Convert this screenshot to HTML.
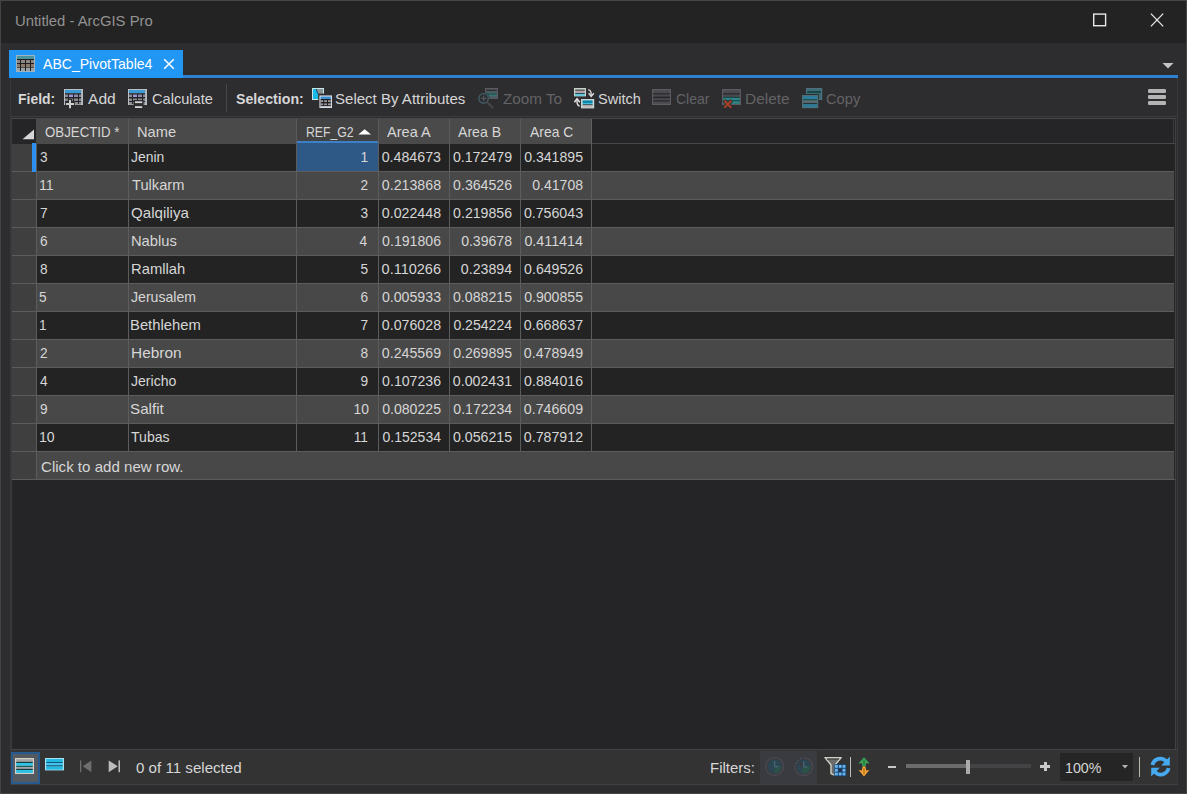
<!DOCTYPE html>
<html><head><meta charset="utf-8"><title>Untitled - ArcGIS Pro</title>
<style>
html,body{margin:0;padding:0;}
body{width:1187px;height:794px;overflow:hidden;background:#2d2d30;font-family:"Liberation Sans", sans-serif;position:relative;}
#root{position:absolute;left:0;top:0;width:1187px;height:794px;overflow:hidden;}
#root div,#root svg{position:absolute;}
.t{position:absolute;white-space:pre;line-height:normal;font-family:"Liberation Sans", sans-serif;}
</style></head><body><div id="root">
<div style="left:0px;top:0px;width:1187px;height:43px;background:#232323;"></div>
<div style="left:0px;top:0px;width:1187px;height:1px;background:#464646;"></div>
<div style="left:0px;top:0px;width:1px;height:794px;background:#444446;"></div>
<div style="left:1186px;top:0px;width:1px;height:794px;background:#454548;"></div>
<div style="left:0px;top:793px;width:1187px;height:1px;background:#454548;"></div>
<div style="left:9px;top:50px;width:174px;height:27.5px;background:#2196f3;"></div>
<div style="left:183px;top:74.9px;width:995px;height:2.8px;background:#2e80d2;"></div>
<div style="left:10px;top:78px;width:1168px;height:707px;background:transparent;box-sizing:border-box;border:1px solid #414144;border-left-color:#38383b;border-right-color:#38383b;border-top:none;"></div>
<div style="left:11px;top:116px;width:1166px;height:1px;background:#3c3c40;"></div>
<div style="left:226px;top:84px;width:1px;height:28px;background:#47474a;"></div>
<div style="left:12px;top:118px;width:1164px;height:632px;background:#252528;"></div>
<div style="left:12px;top:118px;width:1164px;height:1px;background:#47474a;"></div>
<div style="left:11px;top:118px;width:1px;height:632px;background:#3a3a3d;"></div>
<div style="left:1175px;top:118px;width:1px;height:632px;background:#414144;"></div>
<div style="left:12px;top:119px;width:24px;height:24px;background:#252528;"></div>
<div style="left:36px;top:119px;width:556px;height:25px;background:#4a4a4a;"></div>
<div style="left:297px;top:119px;width:81px;height:25px;background:#424242;"></div>
<div style="left:297px;top:141px;width:81px;height:2px;background:#3b80c8;"></div>
<div style="left:592px;top:143px;width:583px;height:1px;background:#47474a;"></div>
<div style="left:128px;top:119px;width:1px;height:25px;background:#5a5a5a;"></div>
<div style="left:296px;top:119px;width:1px;height:25px;background:#5a5a5a;"></div>
<div style="left:378px;top:119px;width:1px;height:25px;background:#5a5a5a;"></div>
<div style="left:449px;top:119px;width:1px;height:25px;background:#5a5a5a;"></div>
<div style="left:520px;top:119px;width:1px;height:25px;background:#5a5a5a;"></div>
<div style="left:591px;top:119px;width:1px;height:25px;background:#606060;"></div>
<div style="left:1173px;top:119px;width:1px;height:24px;background:#3a3a3e;"></div>
<svg style="left:12px;top:118px" width="24" height="26"><path d="M10.5 21.3 L22 21.3 L22 11.5 Z" fill="#d6d6d6"/></svg>
<svg style="left:356px;top:126px" width="18" height="10"><path d="M2.3 8.4 L15 8.4 L8.65 3.3 Z" fill="#ffffff"/></svg>
<div style="left:12px;top:144px;width:24px;height:27px;background:#3f3f3f;"></div>
<div style="left:37px;top:144px;width:1137px;height:27px;background:#232323;"></div>
<div style="left:12px;top:171px;width:1162px;height:1px;background:#5c5c5c;"></div>
<div style="left:12px;top:172px;width:24px;height:27px;background:#3f3f3f;"></div>
<div style="left:37px;top:172px;width:1137px;height:27px;background:#484848;"></div>
<div style="left:12px;top:199px;width:1162px;height:1px;background:#5c5c5c;"></div>
<div style="left:12px;top:200px;width:24px;height:27px;background:#3f3f3f;"></div>
<div style="left:37px;top:200px;width:1137px;height:27px;background:#232323;"></div>
<div style="left:12px;top:227px;width:1162px;height:1px;background:#5c5c5c;"></div>
<div style="left:12px;top:228px;width:24px;height:27px;background:#3f3f3f;"></div>
<div style="left:37px;top:228px;width:1137px;height:27px;background:#484848;"></div>
<div style="left:12px;top:255px;width:1162px;height:1px;background:#5c5c5c;"></div>
<div style="left:12px;top:256px;width:24px;height:27px;background:#3f3f3f;"></div>
<div style="left:37px;top:256px;width:1137px;height:27px;background:#232323;"></div>
<div style="left:12px;top:283px;width:1162px;height:1px;background:#5c5c5c;"></div>
<div style="left:12px;top:284px;width:24px;height:27px;background:#3f3f3f;"></div>
<div style="left:37px;top:284px;width:1137px;height:27px;background:#484848;"></div>
<div style="left:12px;top:311px;width:1162px;height:1px;background:#5c5c5c;"></div>
<div style="left:12px;top:312px;width:24px;height:27px;background:#3f3f3f;"></div>
<div style="left:37px;top:312px;width:1137px;height:27px;background:#232323;"></div>
<div style="left:12px;top:339px;width:1162px;height:1px;background:#5c5c5c;"></div>
<div style="left:12px;top:340px;width:24px;height:27px;background:#3f3f3f;"></div>
<div style="left:37px;top:340px;width:1137px;height:27px;background:#484848;"></div>
<div style="left:12px;top:367px;width:1162px;height:1px;background:#5c5c5c;"></div>
<div style="left:12px;top:368px;width:24px;height:27px;background:#3f3f3f;"></div>
<div style="left:37px;top:368px;width:1137px;height:27px;background:#232323;"></div>
<div style="left:12px;top:395px;width:1162px;height:1px;background:#5c5c5c;"></div>
<div style="left:12px;top:396px;width:24px;height:27px;background:#3f3f3f;"></div>
<div style="left:37px;top:396px;width:1137px;height:27px;background:#484848;"></div>
<div style="left:12px;top:423px;width:1162px;height:1px;background:#5c5c5c;"></div>
<div style="left:12px;top:424px;width:24px;height:27px;background:#3f3f3f;"></div>
<div style="left:37px;top:424px;width:1137px;height:27px;background:#232323;"></div>
<div style="left:12px;top:451px;width:1162px;height:1px;background:#5c5c5c;"></div>
<div style="left:297px;top:143px;width:81px;height:28px;background:#2e5886;"></div>
<div style="left:32px;top:143.4px;width:4.2px;height:28.4px;background:#2d8ff0;"></div>
<div style="left:36px;top:144px;width:1px;height:308px;background:#5c5c5c;"></div>
<div style="left:128px;top:144px;width:1px;height:308px;background:#5c5c5c;"></div>
<div style="left:296px;top:144px;width:1px;height:308px;background:#5c5c5c;"></div>
<div style="left:378px;top:144px;width:1px;height:308px;background:#5c5c5c;"></div>
<div style="left:449px;top:144px;width:1px;height:308px;background:#5c5c5c;"></div>
<div style="left:520px;top:144px;width:1px;height:308px;background:#5c5c5c;"></div>
<div style="left:591px;top:144px;width:1px;height:308px;background:#5c5c5c;"></div>
<div style="left:12px;top:452px;width:24px;height:27px;background:#3f3f3f;"></div>
<div style="left:37px;top:452px;width:1137px;height:27px;background:#484848;"></div>
<div style="left:36px;top:452px;width:1px;height:27px;background:#5c5c5c;"></div>
<div style="left:12px;top:479px;width:1163px;height:1px;background:#5c5c5c;"></div>
<div style="left:11px;top:750px;width:1166px;height:34px;background:#333334;"></div>
<div style="left:11px;top:749px;width:1166px;height:1px;background:#434345;"></div>
<svg class="ic" style="left:1090px;top:10px" width="20" height="20" viewBox="0 0 20 20" ><rect x="3.7" y="4.1" width="11.9" height="11.6" fill="none" stroke="#e8e8e8" stroke-width="1.4"/></svg>
<svg class="ic" style="left:1147px;top:10px" width="20" height="20" viewBox="0 0 20 20" ><path d="M3.9 3.6 L16.2 16.4 M16.2 3.6 L3.9 16.4" stroke="#e8e8e8" stroke-width="1.3" fill="none"/></svg>
<svg class="ic" style="left:16px;top:55px" width="19" height="17" viewBox="0 0 19 17" >
<rect x="0" y="0" width="19" height="17" fill="#9fb4c0"/>
<rect x="1" y="1" width="17" height="3" fill="#4a949e"/>
<rect x="1" y="4" width="17" height="12" fill="#1e1e1e"/>
<g fill="#8e8684"><rect x="1" y="5" width="3" height="3"/><rect x="5" y="5" width="4" height="3"/><rect x="10" y="5" width="4" height="3"/><rect x="15" y="5" width="3" height="3"/></g>
<g fill="#8a7a6c"><rect x="1" y="9" width="3" height="3.5"/><rect x="5" y="9" width="4" height="3.5"/><rect x="10" y="9" width="4" height="3.5"/><rect x="15" y="9" width="3" height="3.5"/></g>
<g fill="#9aa4aa"><rect x="1" y="13" width="3" height="3"/><rect x="5" y="13" width="4" height="3"/><rect x="10" y="13" width="4" height="3"/><rect x="15" y="13" width="3" height="3"/></g>
</svg>
<svg class="ic" style="left:162px;top:57px" width="14" height="14" viewBox="0 0 14 14" ><path d="M2.2 2.2 L11.8 11.8 M11.8 2.2 L2.2 11.8" stroke="#ffffff" stroke-width="1.5" fill="none"/></svg>
<svg class="ic" style="left:1160px;top:61px" width="16" height="10" viewBox="0 0 16 10" ><path d="M2.5 2 L13.5 2 L8 7.5 Z" fill="#c4c4c4"/></svg>
<svg class="ic" style="left:64px;top:89px" width="20" height="20" viewBox="0 0 20 20" >
<rect x="0" y="0" width="19" height="16" fill="#b9c0c4"/>
<rect x="1" y="1" width="16" height="3.2" fill="#3b9bd6"/>
<rect x="1" y="4.2" width="16" height="11" fill="#232327"/>
<g fill="#8a8a94"><rect x="1" y="5.5" width="3" height="2.5"/><rect x="5" y="5.5" width="4" height="2.5" fill="#9a98d2"/><rect x="10" y="5.5" width="4" height="2.5" fill="#8c8cb0"/><rect x="15" y="5.5" width="2" height="2.5"/></g>
<g fill="#8c8c90"><rect x="1" y="9.5" width="3" height="2.5"/><rect x="5" y="9.5" width="4" height="2.5"/><rect x="10" y="9.5" width="4" height="2.5"/><rect x="15" y="9.5" width="2" height="2.5"/></g>
<g fill="#8c8c90"><rect x="1" y="13" width="3" height="2.2"/><rect x="5" y="13" width="4" height="2.2"/><rect x="10" y="13" width="4" height="2.2"/><rect x="15" y="13" width="2" height="2.2"/></g>
<rect x="17" y="1" width="1.2" height="14" fill="#a9aeb2"/>

<path d="M6 10 L6 19.5 M1.2 15 L10.8 15" stroke="#2d2d30" stroke-width="4.4" fill="none"/>
<path d="M6 11 L6 19.2 M2 15 L10 15" stroke="#cdcdcd" stroke-width="2" fill="none"/>
</svg>
<svg class="ic" style="left:128px;top:89px" width="20" height="20" viewBox="0 0 20 20" >
<rect x="0" y="0" width="19" height="16" fill="#b9c0c4"/>
<rect x="1" y="1" width="16" height="3.2" fill="#3b9bd6"/>
<rect x="1" y="4.2" width="16" height="11" fill="#232327"/>
<g fill="#8a8a94"><rect x="1" y="5.5" width="3" height="2.5"/><rect x="5" y="5.5" width="4" height="2.5" fill="#9a98d2"/><rect x="10" y="5.5" width="4" height="2.5" fill="#8c8cb0"/><rect x="15" y="5.5" width="2" height="2.5"/></g>
<g fill="#8c8c90"><rect x="1" y="9.5" width="3" height="2.5"/><rect x="5" y="9.5" width="4" height="2.5"/><rect x="10" y="9.5" width="4" height="2.5"/><rect x="15" y="9.5" width="2" height="2.5"/></g>
<g fill="#8c8c90"><rect x="1" y="13" width="3" height="2.2"/><rect x="5" y="13" width="4" height="2.2"/><rect x="10" y="13" width="4" height="2.2"/><rect x="15" y="13" width="2" height="2.2"/></g>
<rect x="17" y="1" width="1.2" height="14" fill="#a9aeb2"/>

<rect x="5.6" y="11" width="10" height="9" fill="#2d2d30"/>
<rect x="7" y="12.3" width="7.2" height="1.8" fill="#d4d4d4"/>
<rect x="7" y="17.2" width="7.2" height="1.8" fill="#d4d4d4"/>
</svg>
<svg class="ic" style="left:312px;top:88px" width="21" height="21" viewBox="0 0 21 21" >
<rect x="0" y="0" width="12" height="12" fill="#c6e6ee"/>
<rect x="1" y="1" width="10" height="10" fill="#8c9494"/>
<path d="M1 1 L4.2 1 L5.2 4 L6.3 6.2 L6.3 11 L1 11 Z" fill="#19b9ea"/>
<path d="M4.2 1 L5.2 4 L6.3 6.2" stroke="#0d4f78" stroke-width="1" fill="none"/>
<rect x="6.3" y="5.6" width="5.7" height="6.4" fill="#2d2d30"/>
<rect x="6.8" y="6.8" width="13.6" height="13.6" fill="#2d2d30"/>
<rect x="7.4" y="7.4" width="12.6" height="12.6" fill="#d3d9e0"/>
<rect x="8.6" y="8.6" width="10.2" height="2.4" fill="#3b8fd2"/>
<rect x="8.6" y="11" width="10.2" height="7.8" fill="#202024"/>
<g fill="#9a9a9c"><rect x="8.6" y="12.2" width="2.6" height="1.8"/><rect x="12.2" y="12.2" width="2.8" height="1.8"/><rect x="16" y="12.2" width="2.8" height="1.8"/>
<rect x="8.6" y="15.4" width="2.6" height="1.8"/><rect x="12.2" y="15.4" width="2.8" height="1.8"/><rect x="16" y="15.4" width="2.8" height="1.8"/></g>
<rect x="8.6" y="18" width="10.2" height="1" fill="#b9bcc2"/>
</svg>
<svg class="ic" style="left:478px;top:88px" width="21" height="21" viewBox="0 0 21 21" >
<rect x="7" y="0" width="13" height="11" fill="#5a5a60"/>
<rect x="8.2" y="1.6" width="10.6" height="1.4" fill="#2e2e32"/>
<rect x="8.2" y="3.6" width="10.6" height="1.6" fill="#3f5f60"/>
<rect x="8.2" y="5.4" width="10.6" height="1.4" fill="#1f5a58"/>
<rect x="8.2" y="7.2" width="10.6" height="1.2" fill="#2e7a74"/>
<rect x="8.2" y="8.6" width="10.6" height="1.4" fill="#4a5a66"/>
<circle cx="5.6" cy="10.4" r="5.9" fill="#2d2d30"/>
<circle cx="5.6" cy="10.4" r="4.7" fill="#2a2e32" stroke="#43626c" stroke-width="1.3"/>
<path d="M5.6 7.6 L5.6 13.2 M2.8 10.4 L8.4 10.4" stroke="#52565a" stroke-width="1.2"/>
<path d="M9.4 14.4 L14.4 19.6" stroke="#464648" stroke-width="2.2" stroke-linecap="round"/>
</svg>
<svg class="ic" style="left:574px;top:88px" width="21" height="21" viewBox="0 0 21 21" >
<rect x="0" y="0" width="12" height="8.4" fill="#c3d3cc"/>
<rect x="1.2" y="1.6" width="9.6" height="1.2" fill="#3a2e2e"/>
<rect x="1.2" y="2.8" width="9.6" height="2.2" fill="#b3a3a6"/>
<rect x="1.2" y="5" width="9.6" height="1.2" fill="#1f4f66"/>
<rect x="1.2" y="6.2" width="9.6" height="1.6" fill="#57c9dc"/>
<rect x="7" y="11" width="13.2" height="9.4" fill="#c9d6d8"/>
<rect x="8.6" y="12.4" width="10" height="2.6" fill="#0a86a8"/>
<rect x="8.6" y="15" width="10" height="1.2" fill="#46bbdc"/>
<rect x="8.6" y="16.2" width="10" height="1.2" fill="#24484c"/>
<rect x="8.6" y="17.4" width="10" height="2" fill="#c3b6b4"/>
<path d="M14.2 1.6 C16.8 2 17.4 4 17.2 7.6" stroke="#dcdcdc" stroke-width="1.4" fill="none"/>
<path d="M14.6 5.2 L17.2 8.4 L19.8 5.2" stroke="#dcdcdc" stroke-width="1.4" fill="none"/>
<path d="M5.6 18.2 C3.4 17.6 2.8 15.4 3 11.8" stroke="#e4dede" stroke-width="1.4" fill="none"/>
<path d="M0.4 14.2 L3 10.8 L5.8 14.2" stroke="#e4dede" stroke-width="1.6" fill="none"/>
</svg>
<svg class="ic" style="left:652px;top:89px" width="19" height="16" viewBox="0 0 19 16" >
<rect x="0" y="0" width="19" height="16" fill="#5b5b60"/>
<rect x="1.2" y="1.2" width="16.6" height="13.6" fill="#4a4a4f"/>
<rect x="1.2" y="4.2" width="16.6" height="1.3" fill="#2a2a2e"/>
<rect x="1.2" y="7.6" width="16.6" height="1.6" fill="#26262a"/>
<rect x="1.2" y="11.2" width="16.6" height="1.3" fill="#2a2a2e"/>
</svg>
<svg class="ic" style="left:722px;top:89px" width="20" height="20" viewBox="0 0 20 20" >
<rect x="0" y="0" width="19" height="16" fill="#5b5b60"/>
<rect x="1.2" y="1.2" width="16.6" height="13.6" fill="#4a4a4f"/>
<rect x="1.2" y="4.2" width="16.6" height="1.3" fill="#2a2a2e"/>
<rect x="1.2" y="7.6" width="16.6" height="1.6" fill="#1f4a4c"/>
<rect x="1.2" y="9.2" width="16.6" height="1.8" fill="#2e8a8e"/>
<rect x="1.2" y="11" width="16.6" height="1.3" fill="#14504e"/>
<rect x="1.2" y="12.3" width="16.6" height="2.5" fill="#2c8684"/>
<path d="M2 11.4 L9.6 19 M9.6 11.4 L2 19" stroke="#2d2d30" stroke-width="4" fill="none"/>
<path d="M2.4 11.8 L9.2 18.8 M9.2 11.8 L2.4 18.8" stroke="#a53f28" stroke-width="2.1" fill="none"/>
</svg>
<svg class="ic" style="left:802px;top:88px" width="21" height="21" viewBox="0 0 21 21" >
<rect x="4" y="0" width="16.2" height="12" fill="#4b727c"/>
<rect x="5.2" y="1.2" width="13.8" height="1.6" fill="#3f6a72"/>
<rect x="5.2" y="3" width="13.8" height="2.2" fill="#14484a"/>
<rect x="5.2" y="5.4" width="13.8" height="5.4" fill="#3f6a72"/>
<rect x="0" y="6" width="17" height="15" fill="#2d2d30"/>
<rect x="0" y="7" width="16.2" height="13.2" fill="#4f6f76"/>
<rect x="1.2" y="8.2" width="13.8" height="3" fill="#2a7d9e"/>
<rect x="1.2" y="11.2" width="13.8" height="1.3" fill="#164a40"/>
<rect x="1.2" y="12.5" width="13.8" height="2.4" fill="#5c6d74"/>
<rect x="1.2" y="14.9" width="13.8" height="1.3" fill="#263238"/>
<rect x="1.2" y="16.2" width="13.8" height="3" fill="#2c7c98"/>
</svg>
<svg class="ic" style="left:1148px;top:89px" width="18" height="16" viewBox="0 0 18 16" >
<rect x="0" y="0" width="18" height="4" rx="1.2" fill="#b4b4b4"/>
<rect x="0" y="6" width="18" height="4" rx="1.2" fill="#b4b4b4"/>
<rect x="0" y="12" width="18" height="4" rx="1.2" fill="#b4b4b4"/>
</svg>
<div class="ic" style="left:11px;top:752px;width:29px;height:32px;background:#555a60;box-sizing:border-box;border:2px solid #275b90;border-top-width:2px;"></div>
<svg class="ic" style="left:15px;top:758px" width="19" height="16" viewBox="0 0 19 16" >
<rect x="0" y="0" width="19" height="16.2" fill="#d2d0c8"/>
<rect x="1.2" y="1.2" width="16.6" height="2.6" fill="#a3a3a3"/>
<rect x="1.2" y="3.8" width="16.6" height="1.2" fill="#123c44"/>
<rect x="1.2" y="5" width="16.6" height="2.8" fill="#31c1e2"/>
<rect x="1.2" y="7.8" width="16.6" height="1.2" fill="#1d5c5c"/>
<rect x="1.2" y="9" width="16.6" height="1.8" fill="#a3a3a3"/>
<rect x="1.2" y="10.8" width="16.6" height="1.2" fill="#123c44"/>
<rect x="1.2" y="12" width="16.6" height="3" fill="#31c1e2"/>
</svg>
<svg class="ic" style="left:45px;top:758px" width="19" height="13" viewBox="0 0 19 13" >
<rect x="0" y="0" width="19" height="12.4" fill="#a6e2f2"/>
<rect x="1.2" y="1" width="16.6" height="3" fill="#22b9e2"/>
<rect x="1.2" y="4" width="16.6" height="1.2" fill="#0a5b7c"/>
<rect x="1.2" y="5.2" width="16.6" height="2" fill="#3cc4f0"/>
<rect x="1.2" y="7.2" width="16.6" height="1.4" fill="#0a5b7c"/>
<rect x="1.2" y="8.6" width="16.6" height="3" fill="#22b9e2"/>
</svg>
<svg class="ic" style="left:79px;top:759px" width="15" height="15" viewBox="0 0 15 15" ><rect x="1" y="1.4" width="1.3" height="11.8" fill="#6e6e6e"/><path d="M12.4 1.4 L12.4 13.2 L3.8 7.3 Z" fill="#6e6e6e"/></svg>
<svg class="ic" style="left:107px;top:759px" width="15" height="15" viewBox="0 0 15 15" ><rect x="11.5" y="1.4" width="1.5" height="11.8" fill="#bcbcbc"/><path d="M1.7 1.4 L1.7 13.2 L10.8 7.3 Z" fill="#bcbcbc"/></svg>
<div class="ic" style="left:760px;top:751px;width:57px;height:33px;background:#3a3a41;"></div>
<svg class="ic" style="left:764px;top:756px" width="22" height="22" viewBox="0 0 22 22" >
<circle cx="10.6" cy="10.4" r="8.9" fill="none" stroke="#47474d" stroke-width="1.5"/>
<circle cx="10.6" cy="10.4" r="6.9" fill="#2b4652"/>
<path d="M10.6 10.4 L17.5 10.4 A6.9 6.9 0 0 1 10.6 17.3 Z" fill="#2c5248"/>
<path d="M10.6 5 L10.6 10.6 L14.6 10.6" stroke="#486470" stroke-width="1.3" fill="none"/>
</svg>
<svg class="ic" style="left:793px;top:756px" width="22" height="22" viewBox="0 0 22 22" >
<path d="M10.7 1.8 A8.9 8.9 0 1 1 2.2 8" fill="none" stroke="#47474d" stroke-width="1.5"/>
<circle cx="10.7" cy="10.7" r="6.9" fill="#2b4652"/>
<path d="M10.7 10.7 L17.6 10.7 A6.9 6.9 0 0 1 8 17 Z" fill="#2c5248"/>
<path d="M4 3.4 L9.6 10.7" stroke="#3a3a41" stroke-width="3"/>
<circle cx="5.4" cy="4.4" r="0.9" fill="#43566a"/><circle cx="8" cy="2.6" r="0.9" fill="#43566a"/><circle cx="3.6" cy="7" r="0.9" fill="#43566a"/>
<path d="M10.7 5.6 L10.7 10.9 L14.4 10.9" stroke="#486470" stroke-width="1.3" fill="none"/>
</svg>
<svg class="ic" style="left:824px;top:756px" width="23" height="22" viewBox="0 0 23 22" >
<path d="M1 1.6 L17.2 1.6 L11 9 L11 19.4 L7 17.6 L7 9 Z" fill="#6b6b6b" stroke="#cfcfc8" stroke-width="1.4" stroke-linejoin="round"/>
<path d="M3 3.2 L15 3.2" stroke="#4a4a4a" stroke-width="1.2"/>
<rect x="10.2" y="8.2" width="12" height="12" fill="#17477a"/>
<g fill="#6cb3ea">
<rect x="11" y="9" width="2.8" height="2.8"/><rect x="14.8" y="9" width="2.8" height="2.8"/><rect x="18.6" y="9" width="2.8" height="2.8"/>
<rect x="11" y="12.8" width="2.8" height="2.8"/><rect x="18.6" y="12.8" width="2.8" height="2.8"/>
<rect x="11" y="16.6" width="2.8" height="2.8"/><rect x="14.8" y="16.6" width="2.8" height="2.8"/><rect x="18.6" y="16.6" width="2.8" height="2.8"/>
</g>
<rect x="14.8" y="12.8" width="2.8" height="2.8" fill="#2a2f3a"/>
</svg>
<div class="ic" style="left:850px;top:757px;width:1px;height:20px;background:#bdbdbd;"></div>
<svg class="ic" style="left:856px;top:756px" width="16" height="22" viewBox="0 0 16 22" >
<path d="M8 1.2 L13.6 7.6 L10.2 7.2 L9.4 10.6 L6.6 10.6 L5.8 7.2 L2.4 7.6 Z" fill="#3aa355"/>
<path d="M8 20.4 L13.4 14 L10.2 14.6 L9.4 10.6 L6.6 10.6 L5.8 14.6 L2.6 14 Z" fill="#f0a233"/>
<path d="M8 3.5 L8 9" stroke="#1f6a34" stroke-width="1"/>
<path d="M8 12 L8 18" stroke="#a5661a" stroke-width="1"/>
</svg>
<div class="ic" style="left:888px;top:765.5px;width:8.4px;height:2.3px;background:#c8c8c8;"></div>
<div class="ic" style="left:906px;top:764.3px;width:61px;height:3.4px;background:#6c6c6c;"></div>
<div class="ic" style="left:967px;top:764.3px;width:64px;height:3.4px;background:#444446;"></div>
<div class="ic" style="left:966px;top:760px;width:4.2px;height:14px;background:#ababab;"></div>
<div class="ic" style="left:1040.3px;top:765.3px;width:10.2px;height:2.4px;background:#c8c8c8;"></div>
<div class="ic" style="left:1044.2px;top:761.6px;width:2.4px;height:9.8px;background:#c8c8c8;"></div>
<div class="ic" style="left:1059.5px;top:753px;width:73px;height:27.6px;background:#252525;"></div>
<svg class="ic" style="left:1120px;top:763px" width="10" height="8" viewBox="0 0 10 8" ><path d="M2 2 L8 2 L5 5.6 Z" fill="#b4b4b4"/></svg>
<div class="ic" style="left:1139px;top:757px;width:1.2px;height:20.4px;background:#b9b9aa;"></div>
<svg class="ic" style="left:1149px;top:755px" width="23" height="23" viewBox="0 0 23 23" >
<path d="M3.4 10 A8 8 0 0 1 17.4 6.6" fill="none" stroke="#47aaf0" stroke-width="3.8"/>
<path d="M20.8 1.6 L20.8 10.4 L12.2 10.4 Z" fill="#47aaf0"/>
<path d="M19.6 13.2 A8 8 0 0 1 5.6 16.6" fill="none" stroke="#47aaf0" stroke-width="3.8"/>
<path d="M2.2 21.6 L2.2 12.8 L10.8 12.8 Z" fill="#47aaf0"/>
</svg>
<span class="t" id="t0" style="top:12.24px;font-size:15.2px;color:#929292;left:14.96px;transform-origin:0 0;transform:scaleX(0.9772);">Untitled - ArcGIS Pro</span>
<span class="t" id="t1" style="top:56.29px;font-size:14.6px;color:#ffffff;left:43.35px;transform-origin:0 0;transform:scaleX(0.9636);">ABC_PivotTable4</span>
<span class="t" id="t2" style="top:90.97px;font-size:14.4px;color:#d6d6d6;font-weight:bold;left:18.05px;transform-origin:0 0;transform:scaleX(0.9695);">Field:</span>
<span class="t" id="t3" style="top:90.97px;font-size:14.4px;color:#d6d6d6;left:88.49px;transform-origin:0 0;transform:scaleX(1.0817);">Add</span>
<span class="t" id="t4" style="top:90.97px;font-size:14.4px;color:#d6d6d6;left:152.26px;transform-origin:0 0;transform:scaleX(1.0150);">Calculate</span>
<span class="t" id="t5" style="top:90.97px;font-size:14.4px;color:#d6d6d6;font-weight:bold;left:236.27px;transform-origin:0 0;transform:scaleX(0.9856);">Selection:</span>
<span class="t" id="t6" style="top:90.97px;font-size:14.4px;color:#d6d6d6;left:334.91px;transform-origin:0 0;transform:scaleX(1.0448);">Select By Attributes</span>
<span class="t" id="t7" style="top:90.97px;font-size:14.4px;color:#636365;left:502.52px;transform-origin:0 0;transform:scaleX(1.0609);">Zoom To</span>
<span class="t" id="t8" style="top:90.97px;font-size:14.4px;color:#d6d6d6;left:598.09px;transform-origin:0 0;transform:scaleX(1.0093);">Switch</span>
<span class="t" id="t9" style="top:90.97px;font-size:14.4px;color:#636365;left:675.82px;transform-origin:0 0;transform:scaleX(0.9734);">Clear</span>
<span class="t" id="t10" style="top:90.97px;font-size:14.4px;color:#636365;left:745.45px;transform-origin:0 0;transform:scaleX(1.0729);">Delete</span>
<span class="t" id="t11" style="top:90.97px;font-size:14.4px;color:#636365;left:825.83px;transform-origin:0 0;transform:scaleX(1.0215);">Copy</span>
<span class="t" id="t12" style="top:123.97px;font-size:14.4px;color:#d6d6d6;left:45.06px;transform-origin:0 0;transform:scaleX(0.9220);">OBJECTID *</span>
<span class="t" id="t13" style="top:123.97px;font-size:14.4px;color:#d6d6d6;left:136.62px;transform-origin:0 0;transform:scaleX(1.0177);">Name</span>
<span class="t" id="t14" style="top:123.97px;font-size:14.4px;color:#d6d6d6;left:305.75px;transform-origin:0 0;transform:scaleX(0.8509);">REF_G2</span>
<span class="t" id="t15" style="top:123.97px;font-size:14.4px;color:#d6d6d6;left:386.82px;transform-origin:0 0;transform:scaleX(1.0106);">Area A</span>
<span class="t" id="t16" style="top:123.97px;font-size:14.4px;color:#d6d6d6;left:458.15px;transform-origin:0 0;transform:scaleX(0.9789);">Area B</span>
<span class="t" id="t17" style="top:123.97px;font-size:14.4px;color:#d6d6d6;left:529.85px;transform-origin:0 0;transform:scaleX(0.9672);">Area C</span>
<span class="t" id="t18" style="top:149.47px;font-size:14.4px;color:#d6d6d6;left:39.56px;transform-origin:0 0;transform:scaleX(0.9500);">3</span>
<span class="t" id="t19" style="top:149.47px;font-size:14.4px;color:#d6d6d6;left:130.83px;transform-origin:0 0;transform:scaleX(0.9700);">Jenin</span>
<span class="t" id="t20" style="top:149.47px;font-size:14.4px;color:#d6d6d6;right:819.23px;transform-origin:100% 0;transform:scaleX(0.9500);">1</span>
<span class="t" id="t21" style="top:149.47px;font-size:14.4px;color:#d6d6d6;right:746.08px;transform-origin:100% 0;transform:scaleX(0.9893);">0.484673</span>
<span class="t" id="t22" style="top:149.47px;font-size:14.4px;color:#d6d6d6;right:675.20px;transform-origin:100% 0;transform:scaleX(0.9853);">0.172479</span>
<span class="t" id="t23" style="top:149.47px;font-size:14.4px;color:#d6d6d6;right:604.42px;transform-origin:100% 0;transform:scaleX(0.9808);">0.341895</span>
<span class="t" id="t24" style="top:177.47px;font-size:14.4px;color:#d6d6d6;left:39.20px;transform-origin:0 0;transform:scaleX(0.9900);">11</span>
<span class="t" id="t25" style="top:177.47px;font-size:14.4px;color:#d6d6d6;left:132.10px;transform-origin:0 0;transform:scaleX(1.0186);">Tulkarm</span>
<span class="t" id="t26" style="top:177.47px;font-size:14.4px;color:#d6d6d6;right:819.23px;transform-origin:100% 0;transform:scaleX(0.9500);">2</span>
<span class="t" id="t27" style="top:177.47px;font-size:14.4px;color:#d6d6d6;right:745.94px;transform-origin:100% 0;transform:scaleX(0.9857);">0.213868</span>
<span class="t" id="t28" style="top:177.47px;font-size:14.4px;color:#d6d6d6;right:675.31px;transform-origin:100% 0;transform:scaleX(0.9817);">0.364526</span>
<span class="t" id="t29" style="top:177.47px;font-size:14.4px;color:#d6d6d6;right:604.30px;transform-origin:100% 0;transform:scaleX(0.9769);">0.41708</span>
<span class="t" id="t30" style="top:205.47px;font-size:14.4px;color:#d6d6d6;left:39.74px;transform-origin:0 0;transform:scaleX(0.9500);">7</span>
<span class="t" id="t31" style="top:205.47px;font-size:14.4px;color:#d6d6d6;left:130.88px;transform-origin:0 0;transform:scaleX(1.0492);">Qalqiliya</span>
<span class="t" id="t32" style="top:205.47px;font-size:14.4px;color:#d6d6d6;right:819.23px;transform-origin:100% 0;transform:scaleX(0.9500);">3</span>
<span class="t" id="t33" style="top:205.47px;font-size:14.4px;color:#d6d6d6;right:745.94px;transform-origin:100% 0;transform:scaleX(0.9856);">0.022448</span>
<span class="t" id="t34" style="top:205.47px;font-size:14.4px;color:#d6d6d6;right:675.31px;transform-origin:100% 0;transform:scaleX(0.9816);">0.219856</span>
<span class="t" id="t35" style="top:205.47px;font-size:14.4px;color:#d6d6d6;right:604.26px;transform-origin:100% 0;transform:scaleX(0.9854);">0.756043</span>
<span class="t" id="t36" style="top:233.47px;font-size:14.4px;color:#d6d6d6;left:39.65px;transform-origin:0 0;transform:scaleX(0.9500);">6</span>
<span class="t" id="t37" style="top:233.47px;font-size:14.4px;color:#d6d6d6;left:131.29px;transform-origin:0 0;transform:scaleX(1.0221);">Nablus</span>
<span class="t" id="t38" style="top:233.47px;font-size:14.4px;color:#d6d6d6;right:819.70px;transform-origin:100% 0;transform:scaleX(0.9500);">4</span>
<span class="t" id="t39" style="top:233.47px;font-size:14.4px;color:#d6d6d6;right:746.02px;transform-origin:100% 0;transform:scaleX(0.9817);">0.191806</span>
<span class="t" id="t40" style="top:233.47px;font-size:14.4px;color:#d6d6d6;right:675.28px;transform-origin:100% 0;transform:scaleX(0.9783);">0.39678</span>
<span class="t" id="t41" style="top:233.47px;font-size:14.4px;color:#d6d6d6;right:603.68px;transform-origin:100% 0;transform:scaleX(0.9931);">0.411414</span>
<span class="t" id="t42" style="top:261.47px;font-size:14.4px;color:#d6d6d6;left:39.84px;transform-origin:0 0;transform:scaleX(0.9500);">8</span>
<span class="t" id="t43" style="top:261.47px;font-size:14.4px;color:#d6d6d6;left:131.24px;transform-origin:0 0;transform:scaleX(1.0272);">Ramllah</span>
<span class="t" id="t44" style="top:261.47px;font-size:14.4px;color:#d6d6d6;right:819.41px;transform-origin:100% 0;transform:scaleX(0.9500);">5</span>
<span class="t" id="t45" style="top:261.47px;font-size:14.4px;color:#d6d6d6;right:745.84px;transform-origin:100% 0;transform:scaleX(1.0070);">0.110266</span>
<span class="t" id="t46" style="top:261.47px;font-size:14.4px;color:#d6d6d6;right:674.75px;transform-origin:100% 0;transform:scaleX(0.9841);">0.23894</span>
<span class="t" id="t47" style="top:261.47px;font-size:14.4px;color:#d6d6d6;right:604.32px;transform-origin:100% 0;transform:scaleX(0.9817);">0.649526</span>
<span class="t" id="t48" style="top:289.47px;font-size:14.4px;color:#d6d6d6;left:39.28px;transform-origin:0 0;transform:scaleX(0.9500);">5</span>
<span class="t" id="t49" style="top:289.47px;font-size:14.4px;color:#d6d6d6;left:131.18px;transform-origin:0 0;transform:scaleX(0.9809);">Jerusalem</span>
<span class="t" id="t50" style="top:289.47px;font-size:14.4px;color:#d6d6d6;right:819.31px;transform-origin:100% 0;transform:scaleX(0.9500);">6</span>
<span class="t" id="t51" style="top:289.47px;font-size:14.4px;color:#d6d6d6;right:745.96px;transform-origin:100% 0;transform:scaleX(0.9854);">0.005933</span>
<span class="t" id="t52" style="top:289.47px;font-size:14.4px;color:#d6d6d6;right:675.38px;transform-origin:100% 0;transform:scaleX(0.9842);">0.088215</span>
<span class="t" id="t53" style="top:289.47px;font-size:14.4px;color:#d6d6d6;right:604.41px;transform-origin:100% 0;transform:scaleX(0.9810);">0.900855</span>
<span class="t" id="t54" style="top:317.47px;font-size:14.4px;color:#d6d6d6;left:39.20px;transform-origin:0 0;transform:scaleX(0.9500);">1</span>
<span class="t" id="t55" style="top:317.47px;font-size:14.4px;color:#d6d6d6;left:130.32px;transform-origin:0 0;transform:scaleX(1.0291);">Bethlehem</span>
<span class="t" id="t56" style="top:317.47px;font-size:14.4px;color:#d6d6d6;right:819.23px;transform-origin:100% 0;transform:scaleX(0.9500);">7</span>
<span class="t" id="t57" style="top:317.47px;font-size:14.4px;color:#d6d6d6;right:745.94px;transform-origin:100% 0;transform:scaleX(0.9856);">0.076028</span>
<span class="t" id="t58" style="top:317.47px;font-size:14.4px;color:#d6d6d6;right:674.81px;transform-origin:100% 0;transform:scaleX(0.9770);">0.254224</span>
<span class="t" id="t59" style="top:317.47px;font-size:14.4px;color:#d6d6d6;right:604.18px;transform-origin:100% 0;transform:scaleX(0.9867);">0.668637</span>
<span class="t" id="t60" style="top:345.47px;font-size:14.4px;color:#d6d6d6;left:39.75px;transform-origin:0 0;transform:scaleX(0.9500);">2</span>
<span class="t" id="t61" style="top:345.47px;font-size:14.4px;color:#d6d6d6;left:131.25px;transform-origin:0 0;transform:scaleX(1.0705);">Hebron</span>
<span class="t" id="t62" style="top:345.47px;font-size:14.4px;color:#d6d6d6;right:819.23px;transform-origin:100% 0;transform:scaleX(0.9500);">8</span>
<span class="t" id="t63" style="top:345.47px;font-size:14.4px;color:#d6d6d6;right:745.94px;transform-origin:100% 0;transform:scaleX(0.9857);">0.245569</span>
<span class="t" id="t64" style="top:345.47px;font-size:14.4px;color:#d6d6d6;right:675.39px;transform-origin:100% 0;transform:scaleX(0.9808);">0.269895</span>
<span class="t" id="t65" style="top:345.47px;font-size:14.4px;color:#d6d6d6;right:604.24px;transform-origin:100% 0;transform:scaleX(0.9857);">0.478949</span>
<span class="t" id="t66" style="top:373.47px;font-size:14.4px;color:#d6d6d6;left:39.50px;transform-origin:0 0;transform:scaleX(0.9500);">4</span>
<span class="t" id="t67" style="top:373.47px;font-size:14.4px;color:#d6d6d6;left:131.19px;transform-origin:0 0;transform:scaleX(0.9770);">Jericho</span>
<span class="t" id="t68" style="top:373.47px;font-size:14.4px;color:#d6d6d6;right:819.23px;transform-origin:100% 0;transform:scaleX(0.9500);">9</span>
<span class="t" id="t69" style="top:373.47px;font-size:14.4px;color:#d6d6d6;right:746.02px;transform-origin:100% 0;transform:scaleX(0.9817);">0.107236</span>
<span class="t" id="t70" style="top:373.47px;font-size:14.4px;color:#d6d6d6;right:675.18px;transform-origin:100% 0;transform:scaleX(0.9856);">0.002431</span>
<span class="t" id="t71" style="top:373.47px;font-size:14.4px;color:#d6d6d6;right:604.32px;transform-origin:100% 0;transform:scaleX(0.9817);">0.884016</span>
<span class="t" id="t72" style="top:401.47px;font-size:14.4px;color:#d6d6d6;left:39.65px;transform-origin:0 0;transform:scaleX(0.9500);">9</span>
<span class="t" id="t73" style="top:401.47px;font-size:14.4px;color:#d6d6d6;left:130.26px;transform-origin:0 0;transform:scaleX(1.0564);">Salfit</span>
<span class="t" id="t74" style="top:401.47px;font-size:14.4px;color:#d6d6d6;right:818.21px;transform-origin:100% 0;transform:scaleX(0.9655);">10</span>
<span class="t" id="t75" style="top:401.47px;font-size:14.4px;color:#d6d6d6;right:746.11px;transform-origin:100% 0;transform:scaleX(0.9810);">0.080225</span>
<span class="t" id="t76" style="top:401.47px;font-size:14.4px;color:#d6d6d6;right:674.81px;transform-origin:100% 0;transform:scaleX(0.9771);">0.172234</span>
<span class="t" id="t77" style="top:401.47px;font-size:14.4px;color:#d6d6d6;right:604.24px;transform-origin:100% 0;transform:scaleX(0.9857);">0.746609</span>
<span class="t" id="t78" style="top:429.47px;font-size:14.4px;color:#d6d6d6;left:39.00px;transform-origin:0 0;transform:scaleX(0.9784);">10</span>
<span class="t" id="t79" style="top:429.47px;font-size:14.4px;color:#d6d6d6;left:130.92px;transform-origin:0 0;transform:scaleX(0.9781);">Tubas</span>
<span class="t" id="t80" style="top:429.47px;font-size:14.4px;color:#d6d6d6;right:818.63px;transform-origin:100% 0;transform:scaleX(0.9479);">11</span>
<span class="t" id="t81" style="top:429.47px;font-size:14.4px;color:#d6d6d6;right:746.46px;transform-origin:100% 0;transform:scaleX(0.9751);">0.152534</span>
<span class="t" id="t82" style="top:429.47px;font-size:14.4px;color:#d6d6d6;right:675.39px;transform-origin:100% 0;transform:scaleX(0.9839);">0.056215</span>
<span class="t" id="t83" style="top:429.47px;font-size:14.4px;color:#d6d6d6;right:604.18px;transform-origin:100% 0;transform:scaleX(0.9867);">0.787912</span>
<span class="t" id="t84" style="top:458.67px;font-size:14.4px;color:#d6d6d6;left:40.84px;transform-origin:0 0;transform:scaleX(1.0482);">Click to add new row.</span>
<span class="t" id="t85" style="top:759.57px;font-size:14.4px;color:#d6d6d6;left:136.34px;transform-origin:0 0;transform:scaleX(1.0507);">0 of 11 selected</span>
<span class="t" id="t86" style="top:759.57px;font-size:14.4px;color:#d6d6d6;left:709.98px;transform-origin:0 0;transform:scaleX(1.0405);">Filters:</span>
<span class="t" id="t87" style="top:759.57px;font-size:14.4px;color:#d6d6d6;left:1064.98px;transform-origin:0 0;transform:scaleX(0.9904);">100%</span>
</div></body></html>
